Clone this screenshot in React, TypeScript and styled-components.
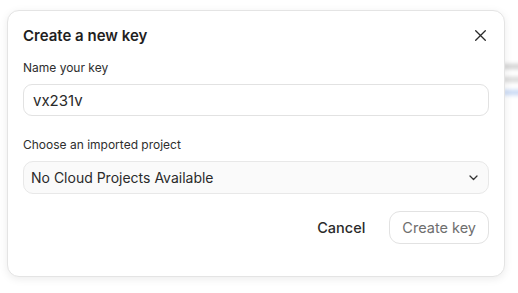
import React from "react";
import styled, { createGlobalStyle } from "styled-components";

const Global = createGlobalStyle`
  html, body { margin: 0; padding: 0; background: #ffffff; }
  body { font-family: Inter, "Noto Sans", sans-serif; color: #1f1f1f; }
  * { box-sizing: border-box; }
`;

const Page = styled.div`
  position: relative;
  width: 518px;
  height: 293px;
  overflow: hidden;
  background: #ffffff;
`;

const Backdrop = styled.div`
  position: absolute;
  left: 502px;
  top: 64px;
  display: flex;
  flex-direction: column;
  gap: 8px;
  filter: blur(2px);
`;

const BackLine = styled.div<{ $w: number; $c: string }>`
  width: ${(p) => p.$w}px;
  height: 5px;
  border-radius: 2px;
  background: ${(p) => p.$c};
`;

const Dialog = styled.div`
  position: absolute;
  left: 7px;
  top: 10px;
  width: 498px;
  height: 267px;
  background: #ffffff;
  border: 1px solid #e4e4e4;
  border-radius: 12px;
  box-shadow: 0 2px 8px rgba(0, 0, 0, 0.08);
  padding: 12px 15px 0 15px;
  display: flex;
  flex-direction: column;
`;

const Header = styled.div`
  display: flex;
  align-items: center;
  justify-content: space-between;
  height: 24px;
`;

const Title = styled.h2`
  margin: 0;
  font-size: 15px;
  font-weight: 600;
  color: #1f1f1f;
`;

const Close = styled.button`
  border: none;
  background: none;
  padding: 0;
  margin-right: 3px;
  width: 12px;
  height: 12px;
  display: flex;
  align-items: center;
  justify-content: center;
  color: #2a2a2a;
`;

const Field = styled.div<{ $mt: number }>`
  display: flex;
  flex-direction: column;
  gap: 9px;
  margin-top: ${(p) => p.$mt}px;
`;

const Label = styled.label`
  font-size: 12px;
  color: #2e2e2e;
  line-height: 15px;
`;

const Input = styled.div`
  height: 32px;
  border: 1px solid #e2e2e2;
  border-radius: 9px;
  padding: 0 9px;
  display: flex;
  align-items: center;
  font-size: 15px;
  color: #2a2a2a;
  background: #ffffff;
`;

const Select = styled.div`
  height: 33px;
  border: 1px solid #e8e8e8;
  border-radius: 10px;
  padding: 0 10px 0 7px;
  display: flex;
  align-items: center;
  justify-content: space-between;
  font-size: 14px;
  color: #2a2a2a;
  background: #fafafa;
`;

const Footer = styled.div`
  display: flex;
  justify-content: flex-end;
  align-items: center;
  gap: 24px;
  margin-top: 17px;
`;

const GhostButton = styled.button`
  border: none;
  background: none;
  padding: 0;
  font-family: inherit;
  font-size: 14.5px;
  font-weight: 500;
  color: #2a2a2a;
`;

const OutlineButton = styled.button`
  height: 33px;
  padding: 0 12px;
  border: 1px solid #e2e2e2;
  border-radius: 11px;
  background: #ffffff;
  font-family: inherit;
  font-size: 14.5px;
  color: #6e6e6e;
`;

export default function App() {
  return (
    <Page>
      <Global />
      <Backdrop>
        <BackLine $w={30} $c="#cfcfcf" />
        <BackLine $w={30} $c="#d6d6d6" />
        <BackLine $w={30} $c="#c4d6f3" />
      </Backdrop>
      <Dialog>
        <Header>
          <Title>Create a new key</Title>
          <Close aria-label="Close">
            <svg width="11" height="11" viewBox="0 0 11 11" fill="none">
              <path d="M0.7 0.7L10.3 10.3M10.3 0.7L0.7 10.3" stroke="currentColor" strokeWidth="1.3" strokeLinecap="round" />
            </svg>
          </Close>
        </Header>
        <Field $mt={13}>
          <Label>Name your key</Label>
          <Input>vx231v</Input>
        </Field>
        <Field $mt={21}>
          <Label>Choose an imported project</Label>
          <Select>
            <span>No Cloud Projects Available</span>
            <svg width="9" height="6" viewBox="0 0 9 6" fill="none">
              <path d="M1 1L4.5 4.5L8 1" stroke="#333" strokeWidth="1.3" strokeLinecap="round" strokeLinejoin="round" />
            </svg>
          </Select>
        </Field>
        <Footer>
          <GhostButton>Cancel</GhostButton>
          <OutlineButton>Create key</OutlineButton>
        </Footer>
      </Dialog>
    </Page>
  );
}
